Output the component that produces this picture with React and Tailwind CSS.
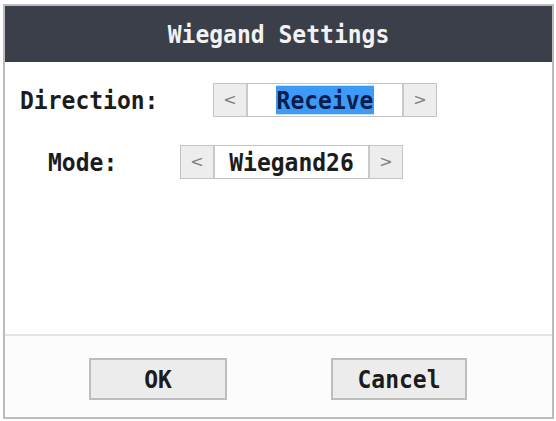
import React from 'react';

const mono = "font-['DejaVu_Sans_Mono','Liberation_Mono',monospace] font-bold inline-block scale-y-110";

// Left/right arrow spinner used by the settings rows
const Spinner = ({ value, valueWidth, selected }) => (
  <div className="flex h-[34px] border border-[#c4c4c4] bg-white">
    <div className="w-[34px] flex items-center justify-center bg-[#ededed] border-r-2 border-[#c9c9c9] text-[#808080] text-[16px] font-['DejaVu_Sans',sans-serif]">
      &lt;
    </div>
    <div className={`flex items-center justify-center ${valueWidth}`}>
      <span
        className={`${mono} text-[23px] leading-[26px] px-[1px] ${
          selected ? 'bg-[#3d9bf5] text-[#0b1d4f]' : 'text-[#1c1c1c]'
        }`}
      >
        {value}
      </span>
    </div>
    <div className="w-[34px] flex items-center justify-center bg-[#ededed] border-l-2 border-[#c9c9c9] text-[#808080] text-[16px] font-['DejaVu_Sans',sans-serif]">
      &gt;
    </div>
  </div>
);

const App = () => {
  return (
    <div className="w-[556px] h-[421px] bg-white pt-[4px] pl-[3px]">
      <div className="w-[551px] h-[415px] border-2 border-[#bcbcbc] flex flex-col">
        {/* Title bar */}
        <div className="h-[56px] bg-[#3b3f4a] flex items-center justify-center">
          <span className={`${mono} text-[23px] text-[#f2f2f2]`}>Wiegand Settings</span>
        </div>

        {/* Settings */}
        <div className="flex-1 flex flex-col pt-[21px] gap-[27px]">
          <div className="flex items-center pl-[15px]">
            <span className="w-[193px]">
              <span className={`${mono} text-[23px] text-[#1c1c1c]`}>Direction:</span>
            </span>
            <Spinner value="Receive" valueWidth="w-[154px]" selected />
          </div>
          <div className="flex items-center pl-[43px]">
            <span className="w-[132px]">
              <span className={`${mono} text-[23px] text-[#1c1c1c]`}>Mode:</span>
            </span>
            <Spinner value="Wiegand26" valueWidth="w-[153px]" />
          </div>
        </div>

        {/* Footer buttons */}
        <div className="h-[83px] border-t-2 border-[#e4e4e4] bg-[#fcfcfc] flex items-start pt-[22px] pl-[84px] gap-[104px]">
          <button className="w-[138px] h-[42px] border-2 border-[#bdbdbd] bg-[#ececec] flex items-center justify-center">
            <span className={`${mono} text-[23px] text-[#1c1c1c]`}>OK</span>
          </button>
          <button className="w-[136px] h-[42px] border-2 border-[#bdbdbd] bg-[#ececec] flex items-center justify-center">
            <span className={`${mono} text-[23px] text-[#1c1c1c]`}>Cancel</span>
          </button>
        </div>
      </div>
    </div>
  );
};

export default App;
